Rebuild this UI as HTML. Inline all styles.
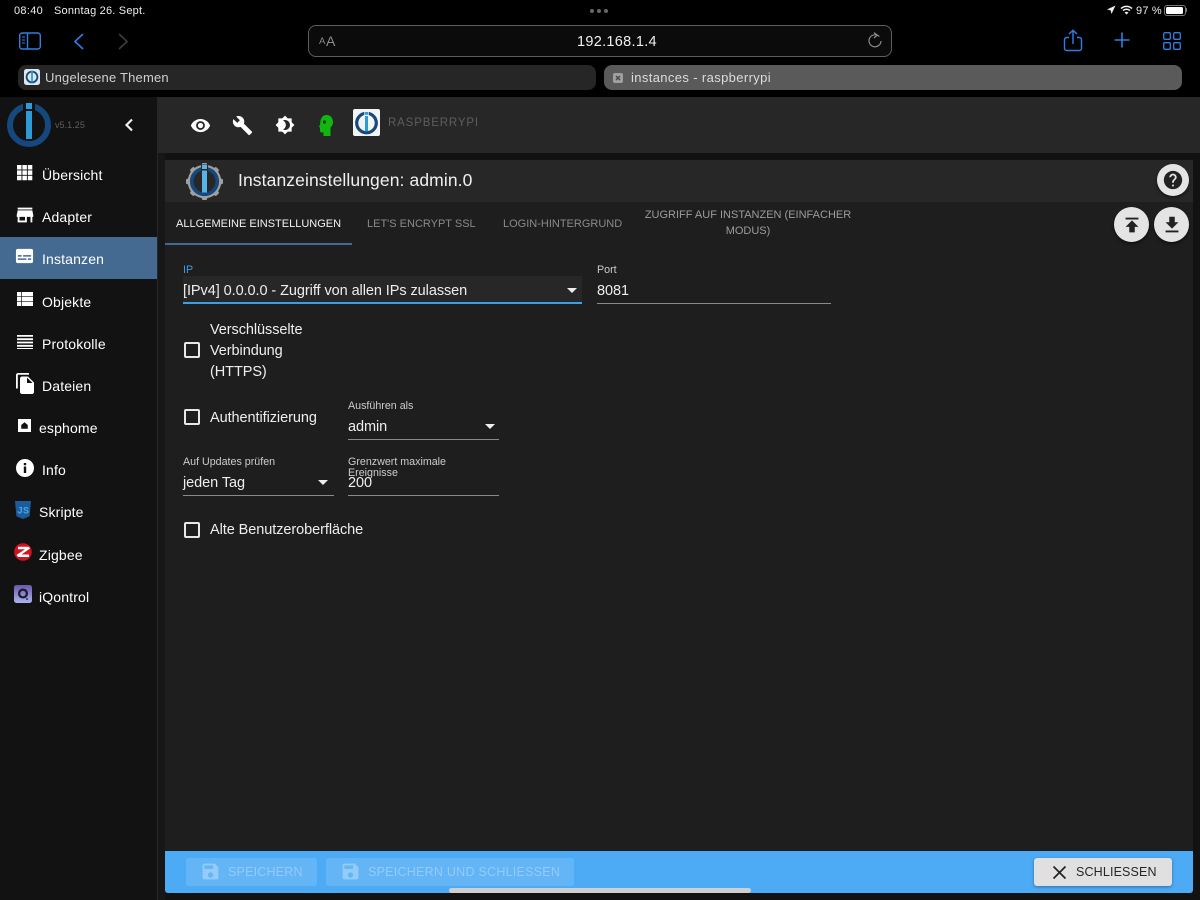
<!DOCTYPE html>
<html lang="de"><head><meta charset="utf-8"><title>instances - raspberrypi</title>
<style>
html,body{margin:0;padding:0;background:#121212}
body{width:1200px;height:900px;position:relative;overflow:hidden;font-family:"Liberation Sans",sans-serif;color:#fff}
.b{position:absolute}
.t{position:absolute;white-space:nowrap;line-height:20px;height:20px}
.n{font-size:14px;color:#fff;letter-spacing:.15px}
.f{font-size:14.5px;color:#eee;letter-spacing:-.07px}
.l{font-size:10.7px;color:#ccc;line-height:11px;height:11px}
.tab{font-size:11px;letter-spacing:0;color:#8a8a8a}
svg{position:absolute;display:block}
.ul{position:absolute;height:1px;background:#8a8a8a}
.cb{position:absolute;width:12px;height:12px;border:2px solid #e8e8e8;border-radius:2px}
.ar{position:absolute;width:0;height:0;border-left:5px solid transparent;border-right:5px solid transparent;border-top:5px solid #eee}
.circ{position:absolute;border-radius:50%;background:#e4e4e4;box-shadow:0 2px 3px rgba(0,0,0,.5)}
</style></head><body>
<!-- Safari chrome -->
<div class="b" style="left:0;top:0;width:1200px;height:97px;background:#000"></div>
<div class="t" style="left:14px;top:1px;font-size:11px;color:#eee;letter-spacing:.3px">08:40</div>
<div class="t" style="left:54px;top:1px;font-size:11px;color:#eee;letter-spacing:.2px">Sonntag 26. Sept.</div>
<div class="b" style="left:590px;top:9px;width:4px;height:4px;border-radius:50%;background:#666"></div>
<div class="b" style="left:597px;top:9px;width:4px;height:4px;border-radius:50%;background:#666"></div>
<div class="b" style="left:604px;top:9px;width:4px;height:4px;border-radius:50%;background:#666"></div>
<svg style="left:1106px;top:5px" width="10" height="10" viewBox="0 0 10 10"><path d="M9.5.5L1 4.5l3.6.9.9 3.6z" fill="#eee"/></svg>
<svg style="left:1120px;top:5px" width="13" height="10" viewBox="0 0 13 10"><path d="M1 3.6a8 8 0 0 1 11 0M3 5.6a5.2 5.2 0 0 1 7 0" stroke="#eee" stroke-width="1.5" fill="none"/><path d="M6.5 9.5l-2-2a3 3 0 0 1 4 0z" fill="#eee"/></svg>
<div class="t" style="left:1136px;top:1px;font-size:11px;color:#eee;letter-spacing:.2px">97 %</div>
<div class="b" style="left:1164px;top:5px;width:20px;height:9px;border:1px solid #777;border-radius:3px"></div>
<div class="b" style="left:1166px;top:7px;width:17px;height:7px;background:#fff;border-radius:1.5px"></div>
<div class="b" style="left:1186px;top:8px;width:1px;height:4px;background:#777"></div>

<svg style="left:18px;top:31px" width="24" height="20" viewBox="0 0 24 20" fill="none" stroke="#2e80e6" stroke-width="1.4"><rect x="1.7" y="2" width="20.6" height="16" rx="2.5"/><path d="M9.5 2v16"/><path d="M4 6h3M4 9h3M4 12h3" stroke-width="1"/></svg>
<svg style="left:72px;top:31px" width="14" height="20" viewBox="0 0 14 20" fill="none" stroke="#2e80e6" stroke-width="1.6"><path d="M11 3L3 10.500l8 7.500"/></svg>
<svg style="left:116px;top:31px" width="14" height="20" viewBox="0 0 14 20" fill="none" stroke="#3d3d3d" stroke-width="1.6"><path d="M3 3l8 7.500-8 7.500"/></svg>
<div class="b" style="left:308px;top:25px;width:582px;height:30px;border:1px solid #5e5e5e;border-radius:8px;background:#0b0b0b"></div>
<div class="t" style="left:319px;top:32px;font-size:9.5px;color:#8c8c8c">A</div>
<div class="t" style="left:326px;top:31px;font-size:14px;color:#8c8c8c">A</div>
<div class="t" style="left:577px;top:32px;font-size:14.500px;color:#f0f0f0;letter-spacing:.3px">192.168.1.4</div>
<svg style="left:867px;top:31px" width="16" height="18" viewBox="0 0 16 18" fill="none" stroke="#8c8c8c" stroke-width="1.200"><path d="M12.300 5.600A6 6 0 1 0 14 10"/><path d="M7 1.600l3.300 2.600L7 7" /></svg>
<svg style="left:1063px;top:29px" width="20" height="23" viewBox="0 0 20 23" fill="none" stroke="#2e80e6" stroke-width="1.400"><path d="M6 8.500H3.500A2 2 0 0 0 1.500 10.500v9a2 2 0 0 0 2 2h13a2 2 0 0 0 2-2v-9a2 2 0 0 0-2-2H14"/><path d="M10 15V1.500M6 5l4-3.700L14 5"/></svg>
<svg style="left:1113px;top:31px" width="18" height="18" viewBox="0 0 18 18" stroke="#2e80e6" stroke-width="1.600"><path d="M9 1.500v15M1.500 9h15"/></svg>
<svg style="left:1162px;top:31px" width="20" height="20" viewBox="0 0 20 20" fill="none" stroke="#2e80e6" stroke-width="1.300"><rect x="1.700" y="1.700" width="6.600" height="6.600" rx="1.200"/><rect x="11.700" y="1.700" width="6.600" height="6.600" rx="1.200"/><rect x="1.700" y="11.700" width="6.600" height="6.600" rx="1.200"/><rect x="11.700" y="11.700" width="6.600" height="6.600" rx="1.200"/></svg>

<!-- tabs -->
<div class="b" style="left:18px;top:65px;width:578px;height:25px;background:#262626;border-radius:8px"></div>
<svg style="left:24px;top:69px" width="16" height="16" viewBox="0 0 16 16"><rect width="16" height="16" rx="2.500" fill="#dfe6ec"/><circle cx="8" cy="8" r="5.400" fill="none" stroke="#15487c" stroke-width="1.800"/><rect x="7.100" y="2" width="1.800" height="11.500" fill="#2f9bd6"/></svg>
<div class="t" style="left:45px;top:68px;font-size:13px;color:#d0d0d0;letter-spacing:.2px">Ungelesene Themen</div>
<div class="b" style="left:604px;top:65px;width:578px;height:25px;background:#5a5a5a;border-radius:8px"></div>
<div class="b" style="left:613px;top:73px;width:10px;height:10px;background:#a0a0a0;border-radius:2px"></div>
<svg style="left:613px;top:73px" width="10" height="10" viewBox="0 0 10 10" stroke="#4a4a4a" stroke-width="1.500"><path d="M3 3l4 4M7 3l-4 4"/></svg>
<div class="t" style="left:631px;top:68px;font-size:13px;color:#dcdcdc;letter-spacing:.37px">instances - raspberrypi</div>

<!-- sidebar -->
<div class="b" style="left:0;top:97px;width:157px;height:803px;background:#121212"></div>
<div class="b" style="left:157px;top:97px;width:1px;height:803px;background:#272727"></div>
<div class="b" style="left:158px;top:153px;width:7px;height:747px;background:#171717"></div>
<svg style="left:5px;top:101px" width="48" height="48" viewBox="0 0 48 48"><circle cx="24" cy="24" r="19" fill="none" stroke="#15487c" stroke-width="6"/><rect x="18" y="0" width="12" height="10" fill="#121212"/><rect x="21" y="2" width="6" height="6" fill="#2f9bd6"/><rect x="21" y="10" width="6" height="28" fill="#2f9bd6"/></svg>
<div class="t" style="left:55px;top:115px;font-size:9px;color:#5f5f5f;letter-spacing:.05px">v5.1.25</div>
<svg style="left:122px;top:117px" width="14" height="16" viewBox="0 0 14 16" fill="none" stroke="#eee" stroke-width="2.200"><path d="M10 2.500L4.500 8l5.500 5.500"/></svg>

<div class="b" style="left:0;top:237px;width:157px;height:42px;background:#446a91"></div>

<svg style="left:17px;top:165px" width="16" height="16" viewBox="0 0 16 16" fill="#fff"><path d="M0 0h4.500v4.500H0zM5.400 0h4.500v4.500H5.400zM10.800 0h4.500v4.500h-4.500zM0 5.400h4.500v4.500H0zM5.400 5.400h4.500v4.500H5.400zM10.800 5.400h4.500v4.500h-4.500zM0 10.800h4.500v4.500H0zM5.400 10.800h4.500v4.500H5.400zM10.800 10.800h4.500v4.500h-4.500z"/></svg>
<svg style="left:14px;top:204px" width="22" height="22" viewBox="0 0 24 24" fill="#fff"><path d="M20 4H4v2h16V4zm1 10v-2l-1-5H4l-1 5v2h1v6h10v-6h4v6h2v-6h1zm-9 4H6v-4h6v4z"/></svg>
<svg style="left:15px;top:247px" width="19" height="19" viewBox="0 0 20 20" fill="#fff"><path fill-rule="evenodd" d="M4 1h14a2 2 0 0 1 2 2v11a2 2 0 0 1-2 2H4a2 2 0 0 1-2-2V3a2 2 0 0 1 2-2zM4 7.500v1.600h4V7.500zM9.500 7.500v1.600H18V7.500zM4 11v1.600h9V11zM14.500 11v1.600H18V11z" transform="translate(-1 1)"/></svg>
<svg style="left:17px;top:292px" width="16" height="14" viewBox="0 0 16 14" fill="#fff"><path d="M0 0h4.300v4.200H0zM5 0h11v4.200H5zM0 4.900h4.300v4.200H0zM5 4.900h11v4.200H5zM0 9.800h4.300v4.200H0zM5 9.800h11v4.200H5z"/></svg>
<svg style="left:17px;top:335px" width="16" height="14" viewBox="0 0 16 14" fill="#fff"><path d="M0 0h16v1.800H0zM0 3.300h16v1.800H0zM0 6.600h16v1.800H0zM0 9.900h16v1.800H0zM0 13v1H16v-1z"/></svg>
<svg style="left:13px;top:371px" width="24" height="24" viewBox="0 0 24 24" fill="#fff"><path d="M16 2H5C3.900 2 3 2.900 3 4v13.500h1.800V3.800H16V2zm-1 3.500l6 6V21c0 1.100-.9 2-2 2H9c-1.100 0-2-.9-2-2l.01-13.500c0-1.100.89-2 1.990-2h6zm-1 6.500h5.500L14 6.500V12z"/></svg>
<svg style="left:18px;top:419px" width="13" height="13" viewBox="0 0 14 14"><rect width="14" height="14" fill="#fff"/><path d="M7 3.500L3.500 6.500v4h7v-4z" fill="#111"/></svg>
<svg style="left:16px;top:459px" width="18" height="18" viewBox="0 0 18 18" fill="#fff"><path fill-rule="evenodd" d="M9 0a9 9 0 1 1 0 18A9 9 0 0 1 9 0zM7.800 7.500v6.500h2.400V7.500zM7.800 4v2.300h2.400V4z"/></svg>
<svg style="left:15px;top:501px" width="16" height="18" viewBox="0 0 16 18"><path d="M0 0h16l-1.400 15.200L8 18l-6.600-2.800z" fill="#1a5c9c"/><text x="2" y="12.500" font-family="Liberation Mono, monospace" font-size="10" font-weight="700" fill="#4aa3e0">JS</text></svg>
<svg style="left:14px;top:543px" width="18" height="18" viewBox="0 0 18 18"><circle cx="9" cy="9" r="8.800" fill="#d3121f"/><path d="M4 3.800H15L16 5.500 7.500 11.500H15V14H4L2.500 12 11 6.300H4z" fill="#fff"/></svg>
<svg style="left:14px;top:585px" width="18" height="18" viewBox="0 0 18 18"><defs><linearGradient id="q" x1="0" y1="0" x2="0" y2="1"><stop offset="0" stop-color="#6c58a8"/><stop offset="1" stop-color="#a9b5ee"/></linearGradient></defs><rect width="18" height="18" rx="2.500" fill="url(#q)"/><circle cx="9" cy="8.500" r="3.900" fill="none" stroke="#1c1c2e" stroke-width="2.300"/><circle cx="13" cy="14" r="1.100" fill="#5b2a96"/></svg>

<div class="t n" style="left:42px;top:165px">Übersicht</div>
<div class="t n" style="left:42px;top:207px">Adapter</div>
<div class="t n" style="left:42px;top:249px">Instanzen</div>
<div class="t n" style="left:42px;top:292px">Objekte</div>
<div class="t n" style="left:42px;top:334px">Protokolle</div>
<div class="t n" style="left:42px;top:376px">Dateien</div>
<div class="t n" style="left:39px;top:418px">esphome</div>
<div class="t n" style="left:42px;top:460px">Info</div>
<div class="t n" style="left:39px;top:502px">Skripte</div>
<div class="t n" style="left:39px;top:545px">Zigbee</div>
<div class="t n" style="left:39px;top:587px">iQontrol</div>

<!-- toolbar -->
<div class="b" style="left:158px;top:97px;width:1042px;height:56px;background:#272727"></div>
<svg style="left:190px;top:115px" width="21" height="21" viewBox="0 0 24 24" fill="#fff"><path d="M12 4.500C7 4.500 2.730 7.610 1 12c1.730 4.390 6 7.500 11 7.500s9.270-3.110 11-7.500c-1.730-4.390-6-7.500-11-7.500zM12 17c-2.760 0-5-2.240-5-5s2.240-5 5-5 5 2.240 5 5-2.240 5-5 5zm0-8c-1.660 0-3 1.340-3 3s1.340 3 3 3 3-1.340 3-3-1.340-3-3-3z"/></svg>
<svg style="left:232px;top:115px" width="21" height="21" viewBox="0 0 24 24" fill="#fff"><path d="M22.700 19l-9.100-9.100c.9-2.300.4-5-1.500-6.900-2-2-5-2.400-7.400-1.300L9 6 6 9 1.600 4.700C.4 7.100.9 10.100 2.900 12.100c1.900 1.900 4.600 2.400 6.900 1.500l9.100 9.100c.4.400 1 .4 1.400 0l2.300-2.300c.5-.4.500-1.100.1-1.400z"/></svg>
<svg style="left:274.500px;top:115px" width="20" height="20" viewBox="0 0 24 24" fill="#fff"><path d="M20 15.310L23.310 12 20 8.690V4h-4.690L12 .69 8.690 4H4v4.690L.69 12 4 15.310V20h4.690L12 23.310 15.310 20H20v-4.690zM12 18c-.89 0-1.740-.2-2.500-.55C11.560 16.500 13 14.420 13 12s-1.440-4.500-3.500-5.450C10.260 6.200 11.110 6 12 6c3.310 0 6 2.690 6 6s-2.690 6-6 6z"/></svg>
<svg style="left:319px;top:115px" width="14" height="21" viewBox="0 0 14 21"><path d="M7.500 0C11.500 0 14 3 14 7c0 2.500-1 4-2.500 5.500V21H4.500v-3.500H2.500C1.500 17.500 1 16.500 1 15.500V12.500L0 12l1.200-3C1.200 3.500 3.500 0 7.500 0z" fill="#11b70f"/><circle cx="5.500" cy="7" r="1.600" fill="#0b3d0b"/></svg>
<svg style="left:353px;top:109px" width="27" height="27" viewBox="0 0 27 27"><rect width="27" height="27" rx="2" fill="#f2f4f6"/><circle cx="13.500" cy="14" r="9.800" fill="none" stroke="#15487c" stroke-width="3.200"/><rect x="11.300" y="2" width="4.400" height="10" fill="#f2f4f6"/><rect x="12" y="3" width="3" height="2.800" fill="#2f9bd6"/><rect x="12" y="7" width="3" height="15" fill="#2f9bd6"/></svg>
<div class="t" style="left:388px;top:113px;font-size:11.500px;color:#5e5e5e;letter-spacing:.85px">RASPBERRYPI</div>

<!-- dialog -->
<div class="b" style="left:165px;top:160px;width:1028px;height:733px;background:#1e1e1e"></div>
<div class="b" style="left:165px;top:160px;width:1028px;height:42px;background:#272727"></div>
<svg style="left:185px;top:162px" width="39" height="39" viewBox="0 0 39 39"><g fill="#a0a0a0"><circle cx="19.500" cy="19.500" r="16.800"/><rect x="16.800" y="1" width="5.400" height="37" rx="1.500"/><rect x="1" y="16.800" width="37" height="5.400" rx="1.500"/><rect x="16.800" y="1" width="5.400" height="37" rx="1.500" transform="rotate(45 19.500 19.500)"/><rect x="16.800" y="1" width="5.400" height="37" rx="1.500" transform="rotate(-45 19.500 19.500)"/></g><circle cx="19.500" cy="19.500" r="12.800" fill="#272727" stroke="#15487c" stroke-width="3.600"/><rect x="16" y="2.500" width="7" height="9" fill="#272727"/><rect x="17" y="3" width="5" height="4" fill="#58b4e8"/><rect x="17" y="8.500" width="5" height="22" fill="#58b4e8"/></svg>
<div class="t" style="left:238px;top:170px;font-size:17.500px;color:#f0f0f0;letter-spacing:.1px">Instanzeinstellungen: admin.0</div>
<div class="circ" style="left:1157px;top:164px;width:32px;height:32px"></div>
<svg style="left:1162px;top:169px" width="22" height="22" viewBox="0 0 24 24" fill="#222"><path d="M12 2C6.480 2 2 6.480 2 12s4.480 10 10 10 10-4.480 10-10S17.520 2 12 2zm1 17h-2v-2h2v2zm2.070-7.750l-.9.920C13.450 12.900 13 13.500 13 15h-2v-.5c0-1.100.45-2.100 1.170-2.830l1.240-1.260c.37-.36.59-.86.59-1.410 0-1.100-.9-2-2-2s-2 .9-2 2H8c0-2.210 1.790-4 4-4s4 1.790 4 4c0 .88-.36 1.680-.93 2.250z"/></svg>

<div class="t tab" style="left:176px;top:214px;color:#f2f2f2">ALLGEMEINE EINSTELLUNGEN</div>
<div class="b" style="left:165px;top:243px;width:187px;height:2px;background:#446a91"></div>
<div class="t tab" style="left:367px;top:214px">LET'S ENCRYPT SSL</div>
<div class="t tab" style="left:503px;top:214px">LOGIN-HINTERGRUND</div>
<div class="t tab" style="left:644px;top:207px;width:208px;height:16px;line-height:16px;color:#9c9c9c;text-align:center">ZUGRIFF AUF INSTANZEN (EINFACHER</div>
<div class="t tab" style="left:644px;top:223px;width:208px;height:16px;line-height:16px;color:#9c9c9c;text-align:center">MODUS)</div>

<div class="circ" style="left:1114px;top:207px;width:35px;height:35px"></div>
<svg style="left:1120.500px;top:213.500px" width="22" height="22" viewBox="0 0 24 24" fill="#222"><path d="M5 4v2h14V4H5zm0 10h4v6h6v-6h4l-7-7-7 7z"/></svg>
<div class="circ" style="left:1154px;top:207px;width:35px;height:35px"></div>
<svg style="left:1160.500px;top:213.500px" width="22" height="22" viewBox="0 0 24 24" fill="#222"><path d="M19 9h-4V3H9v6H5l7 7 7-7zM5 18v2h14v-2H5z"/></svg>

<!-- form -->
<div class="t l" style="left:183px;top:265px;color:#3f9be8">IP</div>
<div class="b" style="left:183px;top:276px;width:399px;height:27px;background:#272727"></div>
<div class="b" style="left:183px;top:302px;width:399px;height:2px;background:#3a9fe8"></div>
<div class="t f" style="left:183px;top:281px">[IPv4] 0.0.0.0 - Zugriff von allen IPs zulassen</div>
<div class="ar" style="left:567px;top:288px"></div>
<div class="t l" style="left:597px;top:265px">Port</div>
<div class="t f" style="left:597px;top:281px">8081</div>
<div class="ul" style="left:597px;top:303px;width:234px"></div>

<div class="cb" style="left:184px;top:342px"></div>
<div class="t f" style="left:210px;top:320px">Verschlüsselte</div>
<div class="t f" style="left:210px;top:341px">Verbindung</div>
<div class="t f" style="left:210px;top:362px">(HTTPS)</div>

<div class="cb" style="left:184px;top:409px"></div>
<div class="t f" style="left:210px;top:408px">Authentifizierung</div>
<div class="t l" style="left:348px;top:401px">Ausführen als</div>
<div class="t f" style="left:348px;top:417px">admin</div>
<div class="ar" style="left:485px;top:424px"></div>
<div class="ul" style="left:348px;top:439px;width:151px"></div>

<div class="t l" style="left:183px;top:457px">Auf Updates prüfen</div>
<div class="t f" style="left:183px;top:473px">jeden Tag</div>
<div class="ar" style="left:318px;top:480px"></div>
<div class="ul" style="left:183px;top:495px;width:151px"></div>
<div class="t l" style="left:348px;top:457px">Grenzwert maximale</div>
<div class="t l" style="left:348px;top:468px">Ereignisse</div>
<div class="t f" style="left:348px;top:473px">200</div>
<div class="ul" style="left:348px;top:495px;width:151px"></div>

<div class="cb" style="left:184px;top:522px"></div>
<div class="t f" style="left:210px;top:520px">Alte Benutzeroberfläche</div>

<!-- footer -->
<div class="b" style="left:165px;top:851px;width:1028px;height:42px;background:#4dabf5;border-radius:0 0 3px 3px"></div>
<div class="b" style="left:186px;top:858px;width:131px;height:28px;background:#63b5f6;border-radius:3px"></div>
<div class="b" style="left:326px;top:858px;width:248px;height:28px;background:#63b5f6;border-radius:3px"></div>
<svg style="left:200px;top:861px" width="21" height="21" viewBox="0 0 24 24" fill="#94cbf8"><path d="M17 3H5c-1.110 0-2 .9-2 2v14c0 1.100.89 2 2 2h14c1.100 0 2-.9 2-2V7l-4-4zm-5 16c-1.660 0-3-1.340-3-3s1.340-3 3-3 3 1.340 3 3-1.340 3-3 3zm3-10H5V5h10v4z"/></svg>
<svg style="left:340px;top:861px" width="21" height="21" viewBox="0 0 24 24" fill="#94cbf8"><path d="M17 3H5c-1.110 0-2 .9-2 2v14c0 1.100.89 2 2 2h14c1.100 0 2-.9 2-2V7l-4-4zm-5 16c-1.660 0-3-1.340-3-3s1.340-3 3-3 3 1.340 3 3-1.340 3-3 3zm3-10H5V5h10v4z"/></svg>
<div class="t" style="left:228px;top:862px;font-size:12.500px;color:#94cbf8;letter-spacing:.2px">SPEICHERN</div>
<div class="t" style="left:368px;top:862px;font-size:12.500px;color:#94cbf8;letter-spacing:.25px">SPEICHERN UND SCHLIESSEN</div>
<div class="b" style="left:1034px;top:858px;width:138px;height:28px;background:#e0e0e0;border-radius:3px;box-shadow:0 1px 3px rgba(0,0,0,.35)"></div>
<svg style="left:1051px;top:864px" width="17" height="17" viewBox="0 0 17 17" stroke="#222" stroke-width="1.700"><path d="M2.500 2.500l12 12M14.500 2.500l-12 12"/></svg>
<div class="t" style="left:1076px;top:862px;font-size:12.500px;color:#262626;letter-spacing:.15px">SCHLIESSEN</div>

<div class="b" style="left:449px;top:888px;width:302px;height:5px;background:#cfcfcf;border-radius:3px"></div>
</body></html>
